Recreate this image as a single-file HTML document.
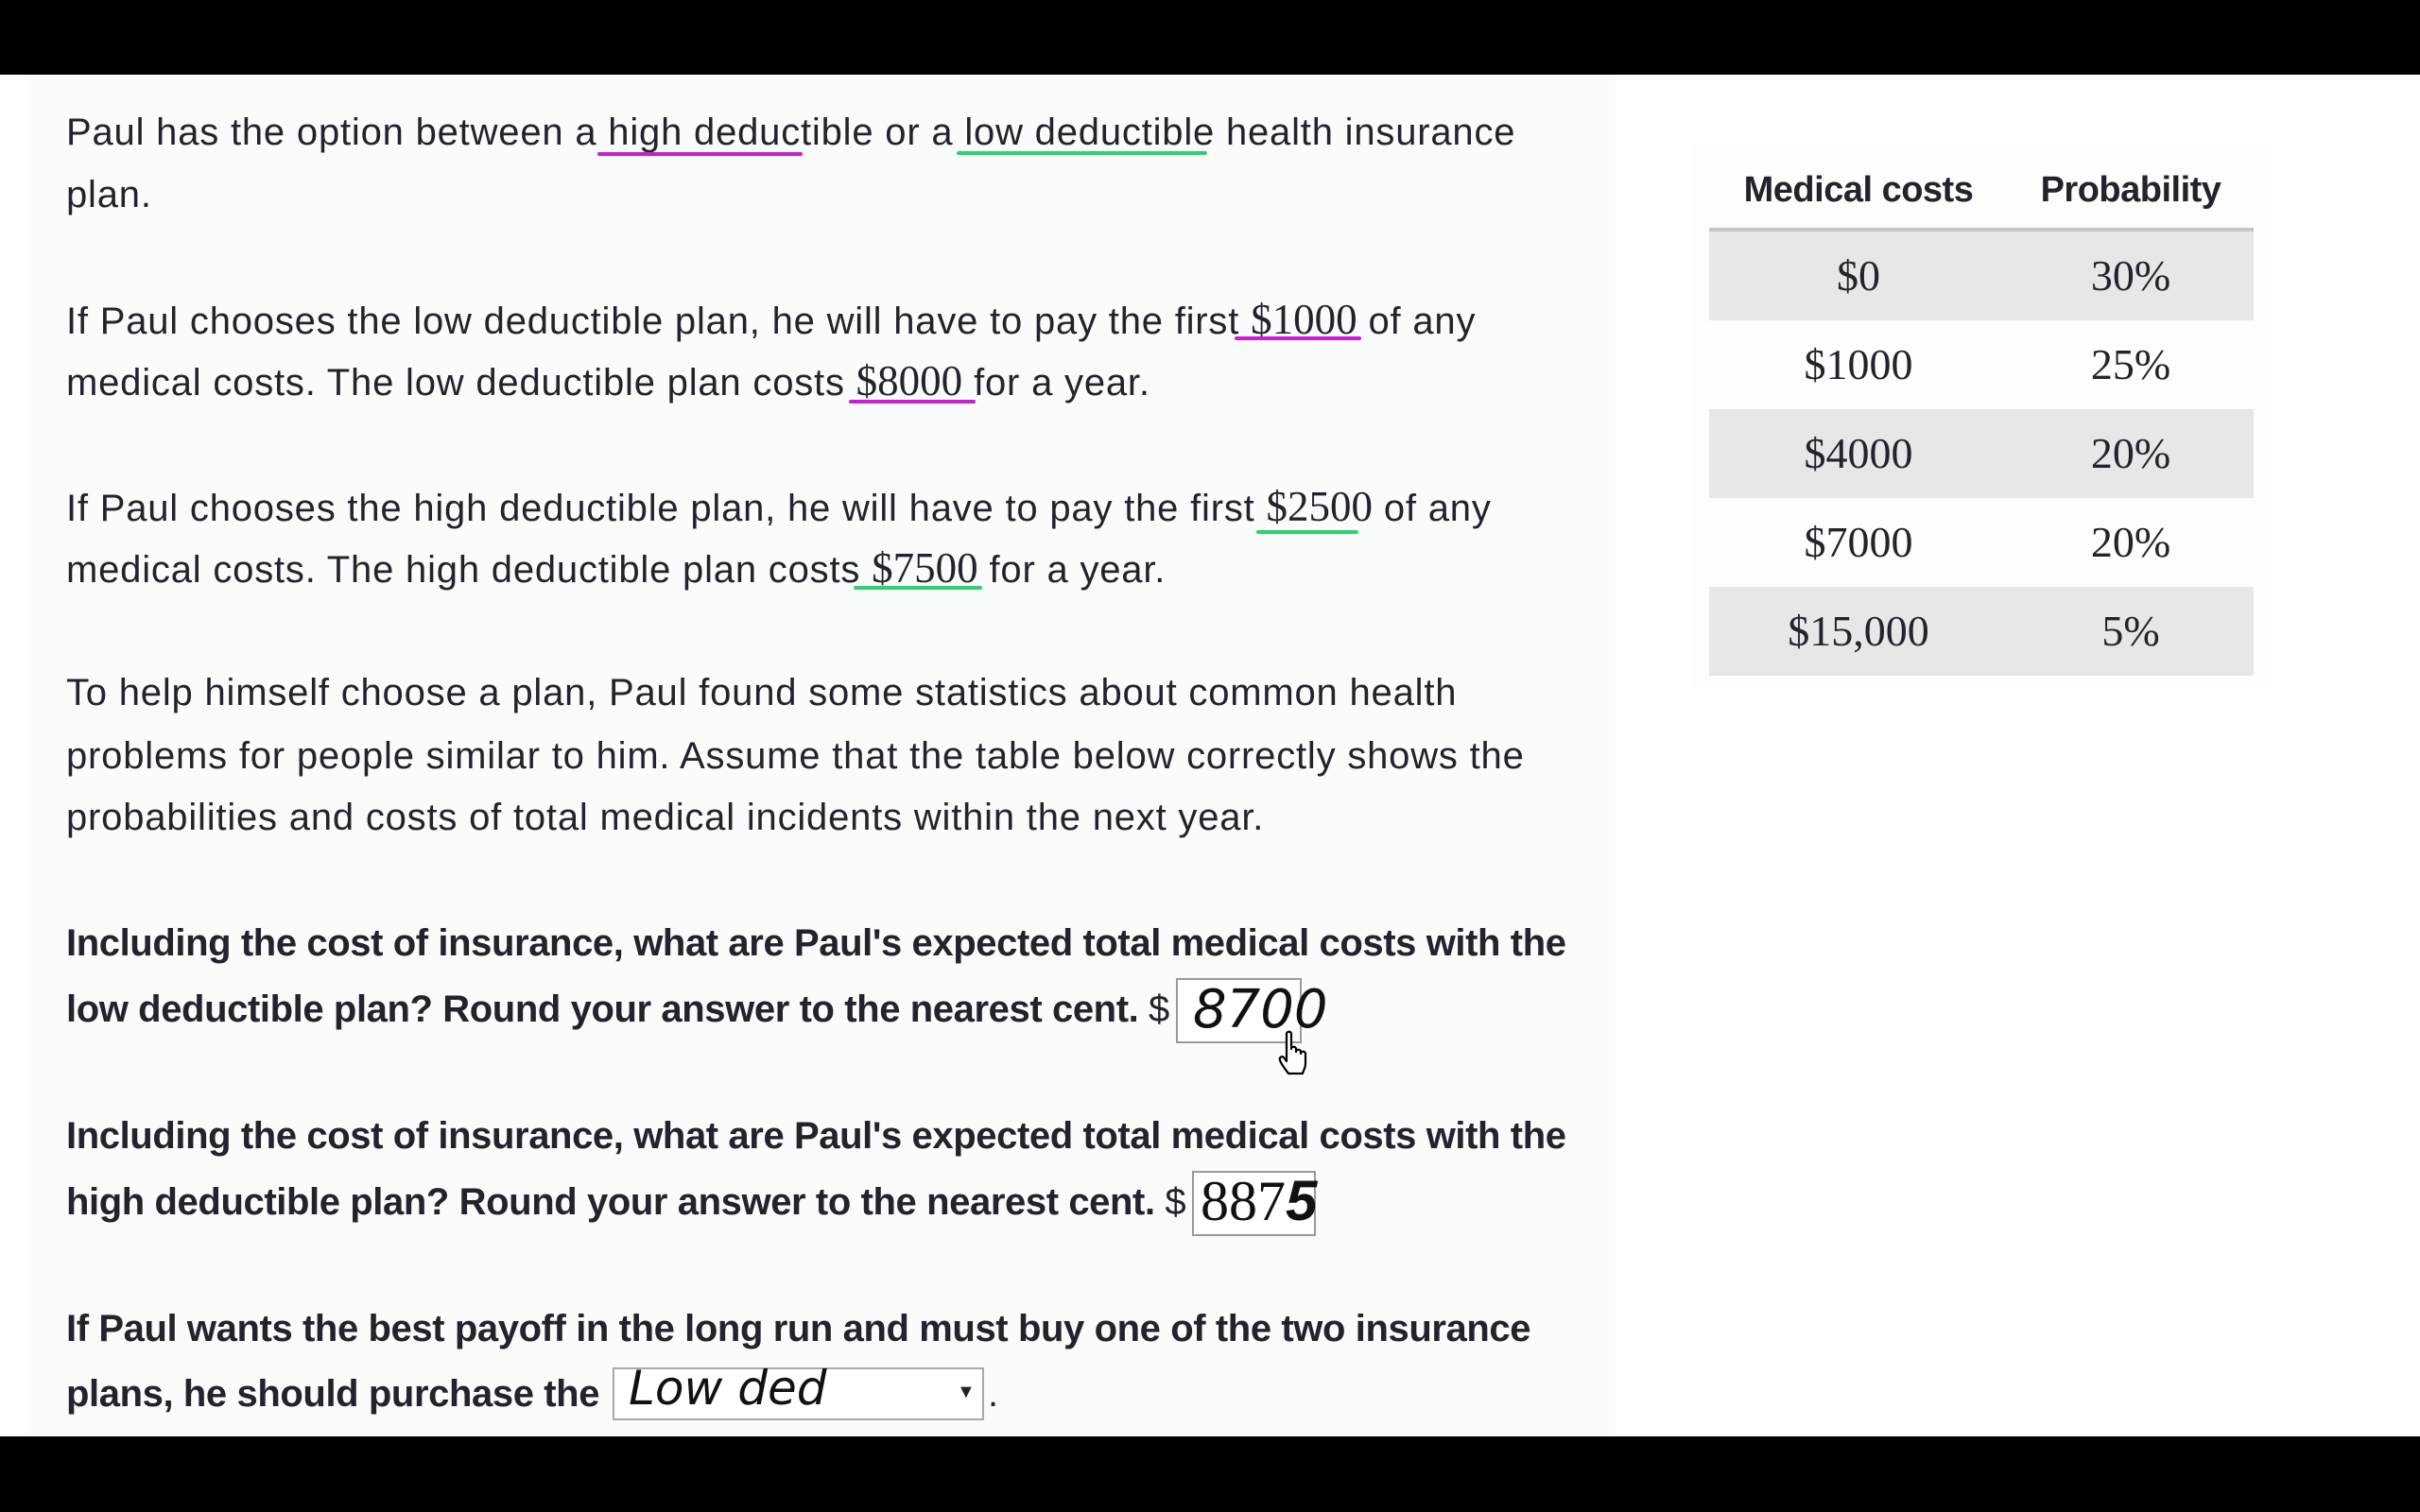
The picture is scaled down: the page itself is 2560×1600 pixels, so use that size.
<!DOCTYPE html>
<html><head><meta charset="utf-8"><style>
html,body{margin:0;padding:0;width:2560px;height:1600px;overflow:hidden;background:#fff}
#top{position:absolute;left:0;top:0;width:2560px;height:79px;background:#000}
#bot{position:absolute;left:0;top:1520px;width:2560px;height:80px;background:#000}
#content{position:absolute;left:29px;top:79px;width:1680px;height:1441px;background:#fafbfb}
.l{position:absolute;left:70px;font-family:"Liberation Sans",sans-serif;font-size:40px;color:#21242c;white-space:nowrap;line-height:50px;letter-spacing:0.8px}
.b{font-weight:bold;letter-spacing:-0.4px}
.m{font-family:"Liberation Serif",serif;font-size:45px;letter-spacing:0}
.u{position:absolute;height:4px;border-radius:2px}
.mg{background:#c81ed0}.gr{background:#2bd36e}
.tbl{position:absolute;left:1791px;top:152px;width:613px;height:576px;background:#fdfdfd;border-radius:8px}
.th{position:absolute;top:180px;font-family:"Liberation Sans",sans-serif;font-weight:bold;font-size:38px;color:#21242c;width:300px;text-align:center;letter-spacing:-0.5px}
.row{position:absolute;left:1808px;width:576px;height:94px}
.row span{position:absolute;top:0;line-height:94px;font-family:"Liberation Serif",serif;font-size:46px;color:#21242c;width:300px;text-align:center}
.box{position:absolute;border:2px solid #9a9a9a;background:#fff}
.hw{position:absolute;font-family:"DejaVu Sans",sans-serif;font-style:italic;color:#111;white-space:nowrap}
</style></head><body>
<div id="top"></div>
<div id="content"></div>

<div class="l" style="top:115px">Paul has the option between a high deductible or a low deductible health insurance</div>
<div class="l" style="top:181px">plan.</div>
<div class="u mg" style="left:632px;top:161px;width:217px"></div>
<div class="u gr" style="left:1012px;top:160px;width:265px"></div>

<div class="l" style="top:313px">If Paul chooses the low deductible plan, he will have to pay the first <span class="m">$1000</span> of any</div>
<div class="l" style="top:378px">medical costs. The low deductible plan costs <span class="m">$8000</span> for a year.</div>
<div class="u mg" style="left:1306px;top:356px;width:134px"></div>
<div class="u mg" style="left:898px;top:423px;width:134px"></div>

<div class="l" style="top:511px">If Paul chooses the high deductible plan, he will have to pay the first <span class="m">$2500</span> of any</div>
<div class="l" style="top:576px">medical costs. The high deductible plan costs <span class="m">$7500</span> for a year.</div>
<div class="u gr" style="left:1329px;top:561px;width:108px"></div>
<div class="u gr" style="left:903px;top:620px;width:136px"></div>

<div class="l" style="top:708px">To help himself choose a plan, Paul found some statistics about common health</div>
<div class="l" style="top:775px">problems for people similar to him. Assume that the table below correctly shows the</div>
<div class="l" style="top:840px">probabilities and costs of total medical incidents within the next year.</div>

<div class="l b" style="top:973px">Including the cost of insurance, what are Paul's expected total medical costs with the</div>
<div class="l b" style="top:1043px">low deductible plan? Round your answer to the nearest cent. <span style="font-weight:normal">$</span></div>
<div class="box" style="left:1244px;top:1035px;width:129px;height:65px"></div>
<div class="hw" style="left:1262px;top:1036px;font-size:56px">8700</div>
<svg style="position:absolute;left:1352px;top:1090px" width="36" height="48" viewBox="0 0 36 48"><path d="M9 4c0-3 5-3 5 0v16c0-3 5-3 5 0v3c0-3 5-3 5 0v2c0-3 5-3 5 0v10c0 6-3 9-3 11H11c-2-3-8-10-9-14-1-3 2-5 4-3l3 4Z" fill="#fff" stroke="#000" stroke-width="2.2" stroke-linejoin="round"/></svg>

<div class="l b" style="top:1177px">Including the cost of insurance, what are Paul's expected total medical costs with the</div>
<div class="l b" style="top:1247px">high deductible plan? Round your answer to the nearest cent. <span style="font-weight:normal">$</span></div>
<div class="box" style="left:1261px;top:1239px;width:127px;height:65px"></div>
<div class="hw" style="left:1270px;top:1236px;font-size:60px;font-style:normal;font-family:'Liberation Serif',serif">887<b style="font-family:'Liberation Sans',sans-serif;font-style:italic">5</b></div>

<div class="l b" style="top:1381px">If Paul wants the best payoff in the long run and must buy one of the two insurance</div>
<div class="l b" style="top:1450px">plans, he should purchase the</div>
<div class="box" style="left:648px;top:1447px;width:389px;height:52px;border-color:#aaa"></div>
<div class="hw" style="left:665px;top:1440px;font-size:50px">Low ded</div>
<div style="position:absolute;left:1012px;top:1462px;font-size:20px;color:#222">▼</div>
<div class="l" style="left:1045px;top:1450px">.</div>

<div class="tbl"></div>
<div class="th" style="left:1816px">Medical costs</div>
<div class="th" style="left:2104px">Probability</div>
<div style="position:absolute;left:1808px;top:241px;width:576px;height:4px;background:#c4c6c6"></div>
<div class="row" style="top:245px;background:#e6e7e6"><span style="left:8px">$0</span><span style="left:296px">30%</span></div>
<div class="row" style="top:339px"><span style="left:8px">$1000</span><span style="left:296px">25%</span></div>
<div class="row" style="top:433px;background:#e6e7e6"><span style="left:8px">$4000</span><span style="left:296px">20%</span></div>
<div class="row" style="top:527px"><span style="left:8px">$7000</span><span style="left:296px">20%</span></div>
<div class="row" style="top:621px;background:#e6e7e6"><span style="left:8px">$15,000</span><span style="left:296px">5%</span></div>

<div id="bot"></div>
</body></html>
